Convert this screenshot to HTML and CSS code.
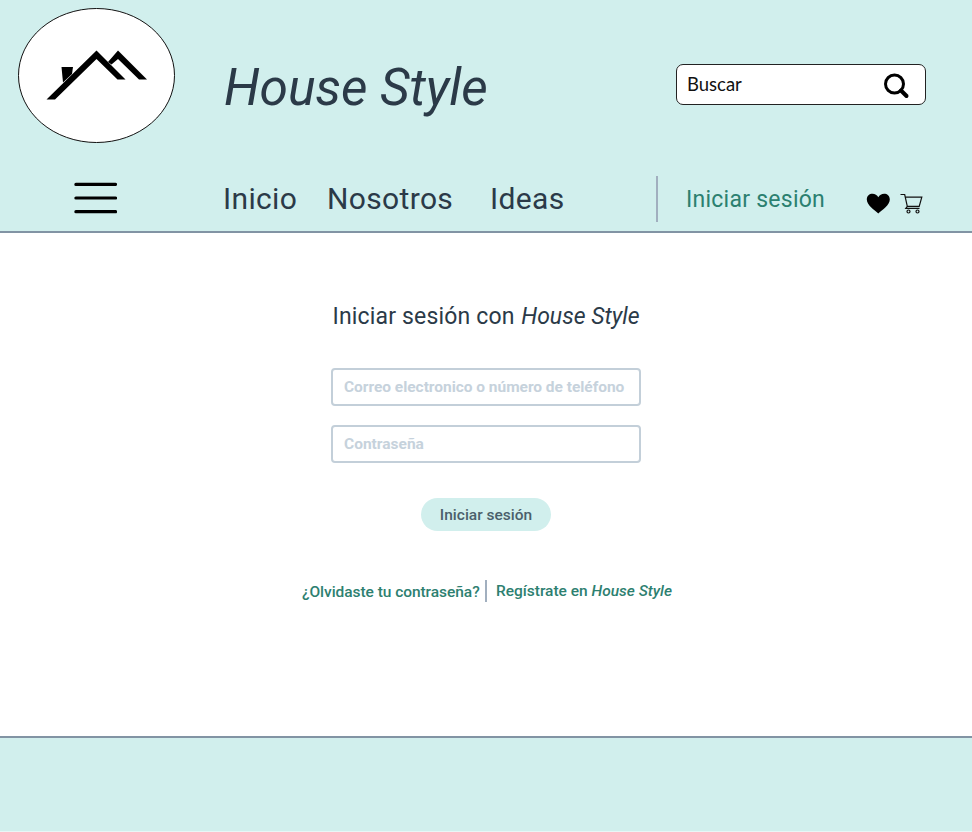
FILE: index.html
```
<!DOCTYPE html>
<html lang="es">
<head>
<meta charset="utf-8">
<title>House Style</title>
<link rel="stylesheet" href="styles.css">
</head>
<body>
<header class="header">
  <div class="top">
    <svg class="logo" viewBox="0 0 158 136" width="158" height="136">
      <ellipse cx="79.500" cy="67.500" rx="78" ry="67" fill="#fff" stroke="#111" stroke-width="1"/>
      <path d="M44.500 59H56L55 66L46 74.500Z"/>
      <path d="M29.500 91.500L79.500 42.500L108.500 71.500H100.500L79.500 51L38 91.500Z"/>
      <path d="M91 54L101 42.500L130 71.500H122L101 51L94.500 56.500Z"/>
    </svg>
    <h1 class="brand">House Style</h1>
    <div class="search">
      <span>Buscar</span>
      <svg width="26" height="26" viewBox="0 0 26 26" fill="none" stroke="#000"><circle cx="10.500" cy="11" r="9" stroke-width="3"/><path d="M17 17.500L22.500 23" stroke-width="4" stroke-linecap="round"/></svg>
    </div>
  </div>
  <nav class="nav">
    <svg class="burger" width="43" height="32" viewBox="0 0 43 32" stroke="#000" stroke-width="3.2" stroke-linecap="round"><path d="M1.900 2.400H41.500M1.900 16H41.500M1.900 29.700H41.500"/></svg>
    <a class="link inicio">Inicio</a>
    <a class="link nosotros">Nosotros</a>
    <a class="link ideas">Ideas</a>
    <span class="rule"></span>
    <a class="signin">Iniciar sesión</a>
    <svg class="heart" width="24" height="21" viewBox="0 0 24 21"><path d="M12.300 20.500C8.300 17 .8 12 .8 6.500C.8 2.800 3.500.8 6.500.8C9 .8 11.100 2 12.300 4.200C13.500 2 15.600.8 18.100.8C21.100.8 23.800 2.800 23.800 6.500C23.800 12 16.300 17 12.300 20.500Z"/></svg>
    <svg class="cart" width="23" height="21" viewBox="0 0 23 21" fill="none" stroke="#111" stroke-width="1.2"><path d="M.5 1.500H4.700L7.300 13.300H19.200L21.800 4.200H5.500M7.300 13.300L5.800 15.300H19.500"/><circle cx="8.500" cy="18.500" r="1.500"/><circle cx="17.500" cy="18.500" r="1.500"/></svg>
  </nav>
</header>
<main class="main">
  <h2 class="heading"><span>Iniciar sesión con</span> <em>House Style</em></h2>
  <form class="form">
    <div class="field"><span class="email">Correo electronico o número de teléfono</span></div>
    <div class="field"><span class="pass">Contraseña</span></div>
    <button class="submit" type="button">Iniciar sesión</button>
  </form>
  <div class="help">
    <a class="forgot">¿Olvidaste tu contraseña?</a>
    <a class="register"><span>Regístrate en</span> <em>House Style</em></a>
  </div>
</main>
<footer class="footer"></footer>
</body>
</html>
```
FILE: styles.css
```
* { box-sizing: border-box; }
body { margin: 0; height: 832px; background: #fff; color: #2b3a48; font-family: Roboto, "Liberation Sans", sans-serif; overflow: hidden; }
h1, h2 { margin: 0; font-weight: 400; }
svg { display: block; flex: none; }
a, span, em { white-space: nowrap; }
.header { height: 233px; background: #d1efed; border-bottom: 2px solid #8294a4; }
.top { display: flex; height: 160px; padding-top: 8px; padding-left: 17px; }
.brand { width: 453px; margin: 50px 0 0 49px; padding-right: 1px; font-size: 51.5px; line-height: 60px; font-style: italic; letter-spacing: -.1px; }
.search { display: flex; align-items: center; justify-content: space-between; width: 250px; height: 41px; margin: 56px 0 0 -1px; padding: 0 15px 0 10px; background: #fff; border: 1px solid #222; border-radius: 7px; color: #111; font: 18.5px Lato, sans-serif; }
.search span { margin-top: -2px; }
.search svg { margin-top: 3px; }
.nav { display: flex; height: 71px; padding-left: 74px; }
.burger { margin: 22px 106px 0 0; }
.link { font-size: 30px; line-height: 36px; margin-top: 21px; letter-spacing: .35px; flex: none; }
.inicio { width: 104px; }
.nosotros { width: 163px; }
.ideas { width: 166px; }
.rule { width: 2px; height: 46px; margin-top: 16px; background: #a1afbf; }
.signin { width: 180px; margin: 26px 0 0 28px; font-size: 23px; line-height: 28px; letter-spacing: .25px; color: #2b8070; flex: none; }
.heart { margin-top: 33px; }
.cart { margin: 33px 0 0 10px; }
.main { display: flex; flex-direction: column; align-items: center; height: 503px; }
.heading { width: 307px; display: flex; justify-content: space-between; margin-top: 70px; font-size: 23px; line-height: 28px; }
.heading span { letter-spacing: .17px; }
.form { display: flex; flex-direction: column; align-items: center; margin-top: 37px; }
.field { width: 310px; height: 38px; margin-bottom: 19px; padding-left: 11px; border: 2px solid #c3cfd9; border-radius: 4px; color: #c6d2dc; font-size: 15.5px; font-weight: 700; line-height: 34px; }
.email { letter-spacing: -.03px; }
.submit { width: 130px; height: 33px; margin: 16px 0 0; padding: 0; border: 0; border-radius: 17px; background: #d1efed; color: #4b5f6b; font: 500 15.5px/34px Roboto, sans-serif; }
.help { display: flex; width: 370px; margin-top: 49px; color: #2d8070; font-size: 15.5px; font-weight: 500; line-height: 20px; }
.forgot { flex: none; width: 186px; height: 22px; padding: 2px 0 0 1px; letter-spacing: -.05px; border-right: 2px solid #a1afbf; }
.register { display: flex; flex: none; gap: 4px; padding: 1px 0 0 9px; letter-spacing: -.02px; }
.footer { height: 96px; background: #d1efed; border-top: 2px solid #8294a4; border-bottom: 1px solid #e8f7f6; }
```
